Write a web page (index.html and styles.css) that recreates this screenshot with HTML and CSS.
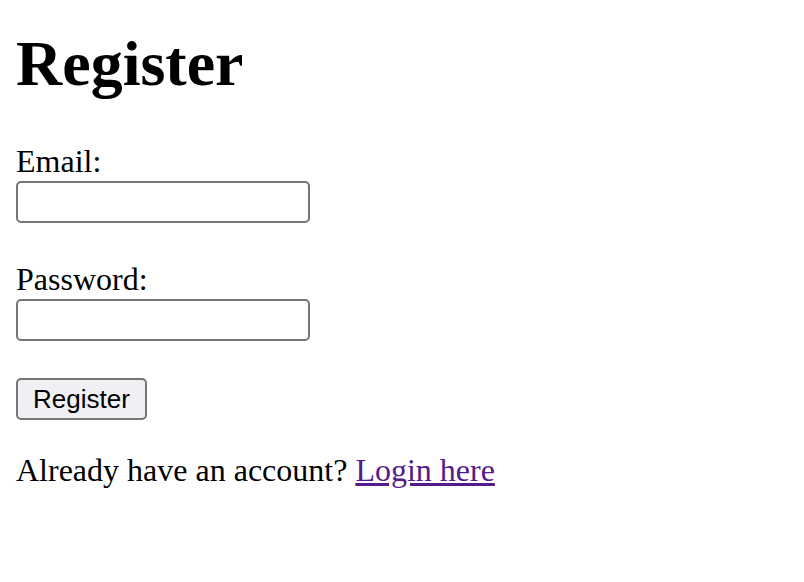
FILE: index.html
```html
<!DOCTYPE html>
<html>
<head>
<meta charset="utf-8">
<title>Register</title>
<link rel="stylesheet" href="styles.css">
</head>
<body>
<h1 class="title">Register</h1>
<form class="form">
  <label class="label" for="email">Email:</label>
  <input class="field" id="email" type="email">
  <label class="label label-next" for="password">Password:</label>
  <input class="field" id="password" type="password">
  <button class="btn" type="button">Register</button>
</form>
<p class="note">Already have an account? <a class="link" href="#login">Login here</a></p>
</body>
</html>
```
FILE: styles.css
```css
html, body {
  margin: 0;
  padding: 0;
  background: #ffffff;
}
body {
  padding: 0 16px;
  font-family: "Liberation Serif", "Times New Roman", serif;
  font-size: 32px;
  color: #000000;
}
.title {
  font-size: 64px;
  font-weight: 700;
  line-height: 74px;
  margin: 0;
  padding-top: 27px;
  padding-bottom: 42px;
}
.form {
  display: flex;
  flex-direction: column;
  align-items: flex-start;
  margin: 0;
}
.label {
  display: block;
  line-height: 37px;
  height: 37px;
}
.label-next {
  margin-top: 38px;
}
.field {
  box-sizing: border-box;
  width: 294px;
  height: 42px;
  margin: 1px 0 0 0;
  border: 2px solid #767676;
  border-radius: 5px;
  background: #ffffff;
  padding: 0 6px;
  font-size: 26px;
}
.btn {
  box-sizing: border-box;
  margin-top: 37px;
  width: 131px;
  height: 42px;
  border: 2px solid #767676;
  border-radius: 5px;
  background: #efeff4;
  font-family: "Liberation Sans", Arial, sans-serif;
  font-size: 26px;
  color: #000000;
  padding: 0;
}
.note {
  margin: 32px 0 0 0;
  line-height: 37px;
}
.link {
  color: #551a8b;
  text-decoration: underline;
}
```
